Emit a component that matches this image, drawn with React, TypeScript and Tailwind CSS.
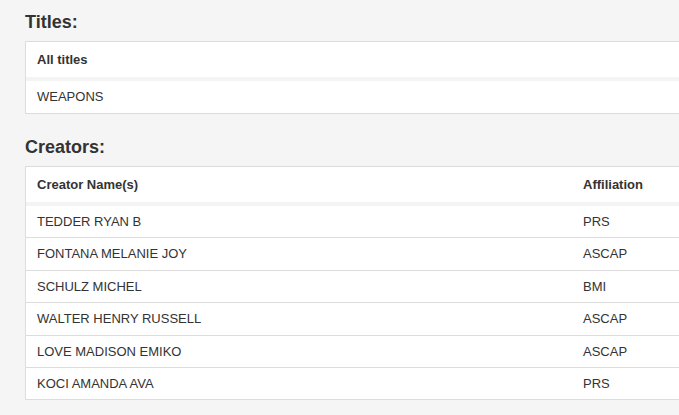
import React from "react";

const creators: [string, string][] = [
  ["TEDDER RYAN B", "PRS"],
  ["FONTANA MELANIE JOY", "ASCAP"],
  ["SCHULZ MICHEL", "BMI"],
  ["WALTER HENRY RUSSELL", "ASCAP"],
  ["LOVE MADISON EMIKO", "ASCAP"],
  ["KOCI AMANDA AVA", "PRS"],
];

export default function App() {
  return (
    <div
      className="min-h-screen w-full overflow-hidden bg-[#f5f5f5] text-[#333] pl-[25px] pt-[12px]"
      style={{ fontFamily: '"Liberation Sans", Arial, sans-serif' }}
    >
      <h2 className="text-[18px] leading-[20px] font-bold">Titles:</h2>
      <div className="mt-[9px] w-[720px] border border-[#dddddd] bg-white text-[13px]">
        <div className="h-[39px] flex items-center px-[11px] font-bold border-b-4 border-[#f4f4f4]">
          All titles
        </div>
        <div className="h-[32px] flex items-center px-[11px]">WEAPONS</div>
      </div>

      <h2 className="mt-[23px] text-[18px] leading-[20px] font-bold">Creators:</h2>
      <div className="mt-[9px] w-[720px] border border-[#dddddd] bg-white text-[13px]">
        <div className="h-[39px] grid grid-cols-[546px_1fr] items-center font-bold border-b-4 border-[#f4f4f4]">
          <div className="px-[11px]">Creator Name(s)</div>
          <div className="px-[11px]">Affiliation</div>
        </div>
        {creators.map(([name, aff], i) => (
          <div
            key={name}
            className={`grid grid-cols-[546px_1fr] items-center h-[31.4px] box-content ${
              i > 0 ? "border-t border-[#dddddd]" : ""
            }`}
          >
            <div className="px-[11px]">{name}</div>
            <div className="px-[11px]">{aff}</div>
          </div>
        ))}
      </div>
    </div>
  );
}
